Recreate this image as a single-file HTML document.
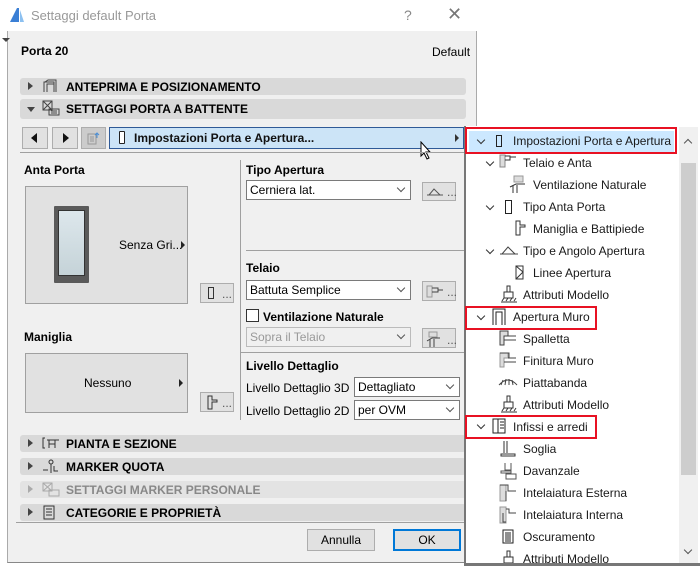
<!DOCTYPE html>
<html><head><meta charset="utf-8"><style>
*{box-sizing:border-box;margin:0;padding:0}
body{width:700px;height:566px;overflow:hidden;background:#fff;font-family:"Liberation Sans",sans-serif;font-size:12px;color:#000;position:relative}
.a{position:absolute}
.b{font-weight:bold}
.bar{position:absolute;left:20px;width:446px;height:17px;background:#d9d9d9;border-radius:3px}
.bar .t{position:absolute;left:46px;top:2px;font-weight:bold;font-size:12px}
.bar .tri{position:absolute;left:8px;top:4px;width:0;height:0;border-left:5px solid #444;border-top:4px solid transparent;border-bottom:4px solid transparent}
.bar .ic{position:absolute;left:22px;top:1px}
.sel{position:absolute;background:#fff;border:1px solid #7a7a7a;height:20px;padding:2px 3px;font-size:12px}
.sel:after{content:"";position:absolute;right:6px;top:4px;width:5px;height:5px;border-right:1px solid #555;border-bottom:1px solid #555;transform:rotate(45deg)}
.btn{position:absolute;background:#e1e1e1;border:1px solid #adadad}
.row{position:absolute;height:22px;line-height:22px;font-size:12px;color:#1a1a1a;white-space:nowrap}
.chev{position:absolute;width:6px;height:6px;border-right:1.5px solid #333;border-bottom:1.5px solid #333;transform:rotate(45deg)}
.red{position:absolute;border:2px solid #e81123}
</style></head><body>
<!-- title bar -->
<svg class="a" style="left:9px;top:7px" width="16" height="16"><path d="M1 15 L8 1 L10 1 L10 15 Z" fill="#3a7fd5"/><path d="M11 3 L15 15 L11 15Z" fill="#8cc0f0"/></svg>
<div class="a" style="left:31px;top:8px;font-size:13px;color:#999">Settaggi default Porta</div>
<div class="a" style="left:404px;top:7px;font-size:14px;color:#888">?</div>
<div class="a" style="left:447px;top:4px;font-size:18px;color:#777">✕</div>
<!-- dialog body -->
<div class="a" style="left:7px;top:31px;width:470px;height:532px;background:#f0f0f0;border-left:1px solid #aaa;border-bottom:1px solid #888;border-right:1px solid #aaa"></div>
<div class="a" style="left:2px;top:38px;border-top:4px solid #444;border-left:4px solid transparent;border-right:4px solid transparent"></div>
<div class="a b" style="left:21px;top:44px">Porta 20</div>
<div class="a" style="left:432px;top:45px">Default</div>

<div class="bar" style="top:78px"><div class="tri"></div><svg class="ic" width="16" height="14"><path d="M2 13V3h10v10M5 13V5h7M3 3l3-2h8v12" fill="none" stroke="#444"/></svg><div class="t">ANTEPRIMA E POSIZIONAMENTO</div></div>
<div class="bar" style="top:99px;height:20px"><div class="a" style="left:7px;top:8px;border-top:5px solid #444;border-left:4px solid transparent;border-right:4px solid transparent"></div><svg class="ic" width="18" height="16"><rect x="1" y="1" width="9" height="9" fill="none" stroke="#444"/><path d="M1 1l9 9M10 1L1 10M7 9h10v6H7zM9 11h6M9 13h6" fill="none" stroke="#444"/></svg><div class="t" style="top:3px">SETTAGGI PORTA A BATTENTE</div></div>

<div class="btn" style="left:22px;top:127px;width:26px;height:22px"><div class="a" style="left:8px;top:5px;border-right:6px solid #111;border-top:5px solid transparent;border-bottom:5px solid transparent"></div></div>
<div class="btn" style="left:52px;top:127px;width:26px;height:22px"><div class="a" style="left:10px;top:5px;border-left:6px solid #111;border-top:5px solid transparent;border-bottom:5px solid transparent"></div></div>
<div class="btn" style="left:81px;top:127px;width:25px;height:22px;background:#ccc"><svg class="a" style="left:4px;top:3px" width="16" height="14"><path d="M2 3h8v10H2zM4 6h4M4 8h4M4 10h4" fill="none" stroke="#999"/><path d="M11 7V2M9 4l2-2 2 2" stroke="#4a8fd8" fill="none"/></svg></div>
<div class="a" style="left:109px;top:127px;width:355px;height:22px;background:#cce4f7;border:1px solid #2f5a97"></div>
<div class="a" style="left:119px;top:131px;width:6px;height:13px;border:1px solid #222;border-radius:1px;background:#fff"></div>
<div class="a b" style="left:134px;top:131px;font-weight:bold;color:#111">Impostazioni Porta e Apertura...</div>
<div class="a" style="left:455px;top:134px;border-left:4px solid #333;border-top:4px solid transparent;border-bottom:4px solid transparent"></div>
<svg class="a" style="left:420px;top:141px" width="14" height="20"><path d="M1 1v14l3-3 3 6 2-1-3-6h4z" fill="#fff" stroke="#000"/></svg>
<div class="a" style="left:20px;top:152px;width:446px;height:1px;background:#a0a0a0"></div>

<!-- left column -->
<div class="a b" style="left:24px;top:163px">Anta Porta</div>
<div class="a" style="left:25px;top:186px;width:163px;height:118px;background:#e1e1e1;border:1px solid #a0a0a0"></div>
<div class="a" style="left:54px;top:206px;width:35px;height:77px;background:#5a5a5a;border-radius:1px"></div>
<div class="a" style="left:58px;top:210px;width:27px;height:66px;background:linear-gradient(#dde7ec,#c5d3d8);border:1px solid #333"></div>
<div class="a" style="left:119px;top:238px">Senza Gri...</div>
<div class="a" style="left:181px;top:241px;border-left:4px solid #222;border-top:4px solid transparent;border-bottom:4px solid transparent"></div>
<div class="btn" style="left:200px;top:283px;width:34px;height:20px"><div class="a" style="left:7px;top:3px;width:6px;height:12px;border:1px solid #333"></div><div class="a" style="left:21px;top:3px;color:#555">...</div></div>
<div class="a" style="left:240px;top:160px;width:1px;height:260px;background:#a0a0a0"></div>
<div class="a b" style="left:24px;top:330px">Maniglia</div>
<div class="a" style="left:25px;top:353px;width:163px;height:60px;background:#e1e1e1;border:1px solid #a0a0a0"></div>
<div class="a" style="left:84px;top:376px">Nessuno</div>
<div class="a" style="left:179px;top:379px;border-left:4px solid #222;border-top:4px solid transparent;border-bottom:4px solid transparent"></div>
<div class="btn" style="left:200px;top:392px;width:34px;height:20px"><svg class="a" style="left:5px;top:2px" width="12" height="15"><path d="M2 1h4v4h5v2H6v7H2z" fill="none" stroke="#333"/></svg><div class="a" style="left:21px;top:3px;color:#555">...</div></div>

<!-- right column -->
<div class="a b" style="left:246px;top:163px">Tipo Apertura</div>
<div class="sel" style="left:246px;top:180px;width:165px">Cerniera lat.</div>
<div class="btn" style="left:422px;top:182px;width:34px;height:19px"><svg class="a" style="left:3px;top:3px" width="18" height="12"><path d="M1 9h16M3 9l5-6 6 6" fill="none" stroke="#555"/></svg><div class="a" style="left:24px;top:2px;color:#555">...</div></div>
<div class="a" style="left:246px;top:250px;width:218px;height:1px;background:#a0a0a0"></div>
<div class="a b" style="left:246px;top:261px">Telaio</div>
<div class="sel" style="left:246px;top:280px;width:165px">Battuta Semplice</div>
<div class="btn" style="left:422px;top:281px;width:34px;height:20px"><svg class="a" style="left:3px;top:3px" width="18" height="13"><path d="M1 1h5v11H1z" fill="#ddd" stroke="#999"/><path d="M6 3h6v4H6M12 5h5" fill="none" stroke="#444"/></svg><div class="a" style="left:24px;top:3px;color:#555">...</div></div>
<div class="a" style="left:246px;top:309px;width:13px;height:13px;border:1px solid #333;background:#fff"></div>
<div class="a b" style="left:263px;top:310px">Ventilazione Naturale</div>
<div class="sel" style="left:246px;top:327px;width:165px;color:#999;border-color:#bbb;background:#f0f0f0">Sopra il Telaio</div>
<div class="btn" style="left:422px;top:328px;width:34px;height:20px"><svg class="a" style="left:3px;top:2px" width="18" height="16"><path d="M3 1h8v5H3z" fill="#ddd" stroke="#999"/><path d="M1 10l5-3h8M4 8v8M8 8v8" fill="none" stroke="#444"/></svg><div class="a" style="left:24px;top:4px;color:#555">...</div></div>
<div class="a" style="left:240px;top:352px;width:224px;height:1px;background:#a0a0a0"></div>
<div class="a b" style="left:246px;top:359px">Livello Dettaglio</div>
<div class="a" style="left:246px;top:381px">Livello Dettaglio 3D</div>
<div class="sel" style="left:354px;top:377px;width:106px">Dettagliato</div>
<div class="a" style="left:246px;top:404px">Livello Dettaglio 2D</div>
<div class="sel" style="left:354px;top:400px;width:106px">per OVM</div>

<!-- bottom bars -->
<div class="bar" style="top:435px"><div class="tri"></div><svg class="ic" width="18" height="14"><path d="M3 2H1v10h2M5 4h12M7 4v8M13 4v8M7 8h6" fill="none" stroke="#333"/></svg><div class="t">PIANTA E SEZIONE</div></div>
<div class="bar" style="top:458px"><div class="tri"></div><svg class="ic" width="18" height="15"><circle cx="9" cy="3" r="2" fill="none" stroke="#333"/><path d="M9 5v9M1 11h5M12 7v5h4" fill="none" stroke="#333"/></svg><div class="t">MARKER QUOTA</div></div>
<div class="bar" style="top:481px;background:#e3e3e3"><div class="tri" style="border-left-color:#aaa"></div><svg class="ic" width="18" height="16"><rect x="1" y="1" width="9" height="8" fill="none" stroke="#aaa"/><path d="M1 1l9 8M10 1L1 9M7 8h10v6H7z" fill="none" stroke="#aaa"/></svg><div class="t" style="color:#888">SETTAGGI MARKER PERSONALE</div></div>
<div class="bar" style="top:504px"><div class="tri"></div><svg class="ic" width="14" height="15"><path d="M2 1h10v13H2zM4 4h6M4 7h6M4 10h6" fill="none" stroke="#333"/></svg><div class="t">CATEGORIE E PROPRIETÀ</div></div>
<div class="a" style="left:16px;top:522px;width:450px;height:1px;background:#a0a0a0"></div>
<div class="btn" style="left:307px;top:529px;width:68px;height:22px;text-align:center;line-height:20px">Annulla</div>
<div class="btn" style="left:393px;top:529px;width:68px;height:22px;text-align:center;line-height:18px;border:2px solid #0078d7">OK</div>

<!-- popup -->
<div class="a" style="left:464px;top:126px;width:236px;height:440px;background:#fff;border-left:2px solid #777;border-bottom:3px solid #777"></div>
<div class="a" style="left:679px;top:127px;width:19px;height:436px;background:#f0f0f0"></div>
<div class="a" style="left:681px;top:163px;width:15px;height:312px;background:#cdcdcd"></div>
<div class="a" style="left:685px;top:140px;width:6px;height:6px;border-left:1.5px solid #555;border-top:1.5px solid #555;transform:rotate(45deg)"></div>
<div class="a" style="left:685px;top:547px;width:6px;height:6px;border-right:1.5px solid #555;border-bottom:1.5px solid #555;transform:rotate(45deg)"></div>
<div class="a" style="left:469px;top:131px;width:205px;height:21px;background:#cce8ff"></div>

<div class="chev" style="left:478px;top:137px"></div><div class="a" style="left:496px;top:135px;width:6px;height:12px;border:1px solid #222"></div><div class="row" style="left:513px;top:130px">Impostazioni Porta e Apertura</div>
<div class="chev" style="left:487px;top:159px"></div><svg class="a" style="left:499px;top:154px" width="18" height="14"><path d="M1 1h5v12H1z" fill="#ddd" stroke="#888"/><path d="M6 2h5v4H6M11 3h6" fill="none" stroke="#333"/></svg><div class="row" style="left:523px;top:152px">Telaio e Anta</div>
<svg class="a" style="left:509px;top:175px" width="20" height="18"><path d="M5 1h9v6H5z" fill="#ddd" stroke="#999"/><path d="M1 12l6-3h9M4 10v8M8 10v8" fill="none" stroke="#333"/></svg><div class="row" style="left:533px;top:174px">Ventilazione Naturale</div>
<div class="chev" style="left:487px;top:203px"></div><div class="a" style="left:505px;top:200px;width:7px;height:14px;border:1px solid #222"></div><div class="row" style="left:523px;top:196px">Tipo Anta Porta</div>
<svg class="a" style="left:514px;top:220px" width="12" height="16"><path d="M2 1h4v4h5v2H6v8H2z" fill="none" stroke="#333"/></svg><div class="row" style="left:533px;top:218px">Maniglia e Battipiede</div>
<div class="chev" style="left:487px;top:247px"></div><svg class="a" style="left:499px;top:244px" width="20" height="12"><path d="M1 10h18M3 10l6-7 7 7" fill="none" stroke="#444"/></svg><div class="row" style="left:523px;top:240px">Tipo e Angolo Apertura</div>
<svg class="a" style="left:515px;top:265px" width="10" height="15"><path d="M1 1v13h7V1zM1 1l7 6-7 7" fill="none" stroke="#333"/></svg><div class="row" style="left:533px;top:262px">Linee Apertura</div>
<svg class="a" style="left:500px;top:285px" width="18" height="18"><path d="M7 1h3v6H7zM4 7h9v6H4zM1 17h16" fill="none" stroke="#333"/><path d="M2 16l2-3M6 16l2-3M10 16l2-3M14 16l2-3" stroke="#333"/></svg><div class="row" style="left:523px;top:284px">Attributi Modello</div>
<div class="chev" style="left:478px;top:313px"></div><svg class="a" style="left:492px;top:308px" width="14" height="18"><path d="M1 17V1h12v16M4 17V4h6v13" fill="none" stroke="#222"/></svg><div class="row" style="left:513px;top:306px">Apertura Muro</div>
<svg class="a" style="left:499px;top:330px" width="18" height="16"><path d="M1 1h8v5H5v9H1z" fill="#ddd" stroke="#444"/><path d="M9 6h8M5 10h12" stroke="#444"/></svg><div class="row" style="left:523px;top:328px">Spalletta</div>
<svg class="a" style="left:499px;top:352px" width="18" height="16"><path d="M1 1h8v5H5v9H1z" fill="#ddd" stroke="#999"/><path d="M1 1h9v5M9 6h8M5 10h12" fill="none" stroke="#444"/></svg><div class="row" style="left:523px;top:350px">Finitura Muro</div>
<svg class="a" style="left:498px;top:376px" width="20" height="10"><path d="M1 9q9-10 18 0M3 9l2-5M7 9l1-6M11 9l0-6M15 9l-1-5" fill="none" stroke="#444"/></svg><div class="row" style="left:523px;top:372px">Piattabanda</div>
<svg class="a" style="left:500px;top:395px" width="18" height="18"><path d="M7 1h3v6H7zM4 7h9v6H4zM1 17h16" fill="none" stroke="#333"/><path d="M2 16l2-3M6 16l2-3M10 16l2-3M14 16l2-3" stroke="#333"/></svg><div class="row" style="left:523px;top:394px">Attributi Modello</div>
<div class="chev" style="left:478px;top:422px"></div><svg class="a" style="left:492px;top:418px" width="14" height="16"><path d="M1 1h12v14H1zM6 1v14M8 4h4M8 7h4M8 10h4" fill="none" stroke="#222"/></svg><div class="row" style="left:513px;top:416px">Infissi e arredi</div>
<svg class="a" style="left:500px;top:440px" width="16" height="18"><path d="M4 1v12M7 1v12M1 14h14v2H1z" fill="none" stroke="#333"/></svg><div class="row" style="left:523px;top:438px">Soglia</div>
<svg class="a" style="left:500px;top:462px" width="18" height="18"><path d="M5 1v7h6V1M1 9h10v2H1zM6 12h10v5H6z" fill="none" stroke="#555"/></svg><div class="row" style="left:523px;top:460px">Davanzale</div>
<svg class="a" style="left:499px;top:484px" width="18" height="18"><path d="M1 1h6v16H1z" fill="#ddd" stroke="#999"/><path d="M1 1h8v6h8M7 7v10" fill="none" stroke="#444"/></svg><div class="row" style="left:523px;top:482px">Intelaiatura Esterna</div>
<svg class="a" style="left:499px;top:506px" width="18" height="18"><path d="M1 1h6v16H1z" fill="#ddd" stroke="#999"/><path d="M7 3h3v4h7M7 16h-3v-9" fill="none" stroke="#444"/></svg><div class="row" style="left:523px;top:504px">Intelaiatura Interna</div>
<svg class="a" style="left:502px;top:529px" width="12" height="15"><path d="M1 1h10v13H1zM3 4h6M3 6h6M3 8h6M3 10h6M3 12h6" fill="none" stroke="#222"/></svg><div class="row" style="left:523px;top:526px">Oscuramento</div>
<svg class="a" style="left:500px;top:550px" width="18" height="14"><path d="M7 1h3v6H7zM4 7h9v6H4z" fill="none" stroke="#333"/></svg><div class="row" style="left:523px;top:548px">Attributi Modello</div>
<div class="a" style="left:464px;top:563px;width:236px;height:3px;background:#777"></div>

<div class="red" style="left:465px;top:127px;width:212px;height:27px"></div>
<div class="red" style="left:465px;top:306px;width:132px;height:24px"></div>
<div class="red" style="left:465px;top:415px;width:132px;height:24px"></div>
</body></html>
